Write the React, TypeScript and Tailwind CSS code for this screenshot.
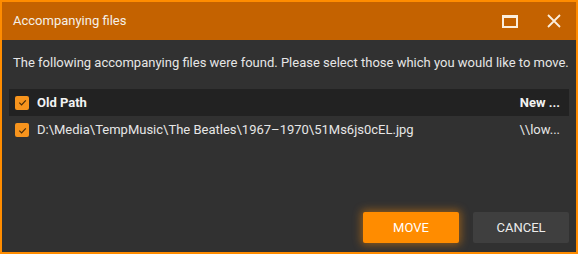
import React from "react";

function Check() {
  return (
    <span className="flex h-[14px] w-[14px] shrink-0 items-center justify-center rounded-[2px] bg-[#f7941d]">
      <svg width="11" height="11" viewBox="0 0 12 12" fill="none">
        <path d="M2.5 6.2 L5 8.6 L9.6 3.6" stroke="#4a2c08" strokeWidth="1.3" />
      </svg>
    </span>
  );
}

export default function App() {
  return (
    <div
      className="flex h-[254px] w-[578px] flex-col border-2 border-[#ff8c00] bg-[#313131] text-[#e6e6e6]"
      style={{ fontFamily: "Roboto, 'Liberation Sans', sans-serif" }}
    >
      {/* Title bar */}
      <div className="flex h-[38px] shrink-0 items-center bg-[#c46200] pl-[11px] pr-[15px]">
        <span className="flex-1 text-[13px] text-[#f5f0e8]">Accompanying files</span>
        <svg width="16" height="13" viewBox="0 0 16 13" className="mr-[29px]" fill="none">
          <rect x="1" y="1" width="14" height="11" stroke="#fbeedd" strokeWidth="2" />
          <rect x="1" y="1" width="14" height="2" fill="#fbeedd" />
        </svg>
        <svg width="14" height="14" viewBox="0 0 14 14" fill="none">
          <path d="M1 1 L13 13 M13 1 L1 13" stroke="#fbeedd" strokeWidth="1.8" />
        </svg>
      </div>

      {/* Body */}
      <div className="flex flex-1 flex-col px-[7px]">
        <p className="mt-[14px] pl-[4px] text-[13px] leading-[18px]">
          The following accompanying files were found. Please select those which you would like to move.
        </p>

        <div className="mt-[17px]">
          <div className="flex h-[27px] items-center bg-[#222222] pl-[6px] pr-[9px] text-[13px] font-bold text-[#f2f2f2]">
            <Check />
            <span className="ml-[8px] flex-1">Old Path</span>
            <span>New ...</span>
          </div>
          <div className="flex h-[28px] items-center pl-[6px] pr-[9px] text-[13px]">
            <Check />
            <span className="ml-[8px] flex-1">D:\Media\TempMusic\The Beatles\1967–1970\51Ms6js0cEL.jpg</span>
            <span>\\low...</span>
          </div>
        </div>

        <div className="mt-auto mb-[9px] flex justify-end gap-[14px]">
          <button className="h-[31px] w-[96px] rounded-[2px] bg-[#ff8c00] text-[13px] text-white shadow-[0_0_8px_2px_rgba(255,140,0,0.45)]">
            MOVE
          </button>
          <button className="h-[31px] w-[96px] rounded-[2px] bg-[#3f3f3f] text-[13px] text-[#ececec]">
            CANCEL
          </button>
        </div>
      </div>
    </div>
  );
}
